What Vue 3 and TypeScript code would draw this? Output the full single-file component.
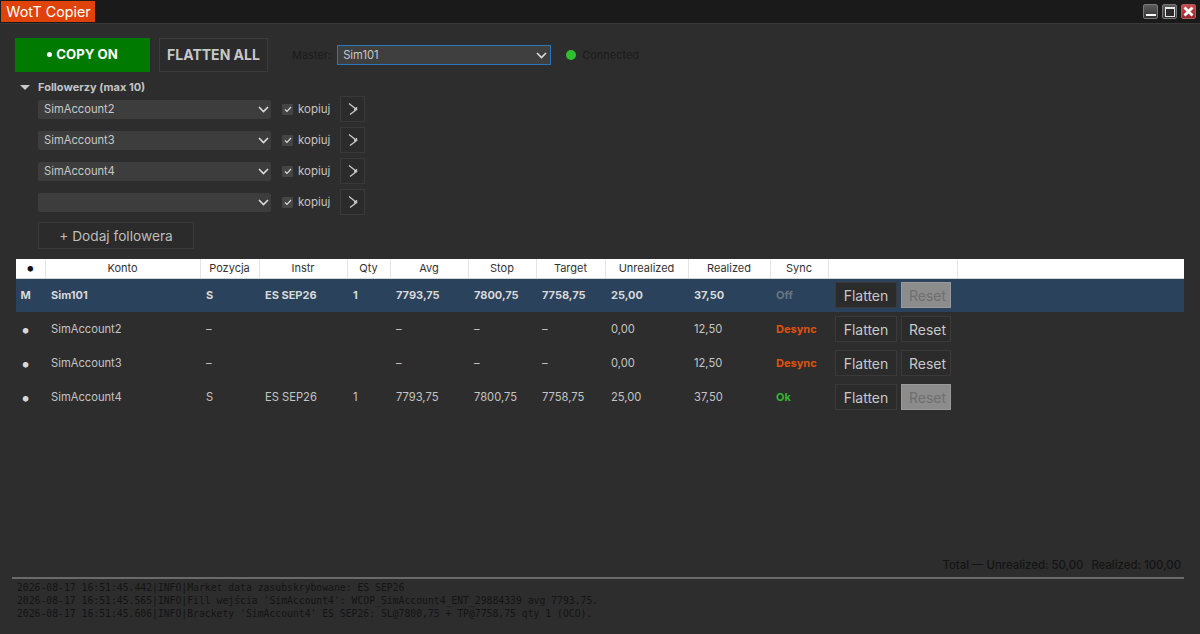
<script setup lang="ts">
type Sync = 'off' | 'desync' | 'ok'

interface Account {
  mark: string
  name: string
  pos: string
  instr: string
  qty: string
  avg: string
  stop: string
  target: string
  unrealized: string
  realized: string
  sync: Sync
  syncLabel: string
  resetDisabled: boolean
  master?: boolean
}

const followers = ['SimAccount2', 'SimAccount3', 'SimAccount4', '']

const columns = [
  { label: '•', width: 29 },
  { label: 'Konto', width: 155 },
  { label: 'Pozycja', width: 59 },
  { label: 'Instr', width: 88 },
  { label: 'Qty', width: 43 },
  { label: 'Avg', width: 78 },
  { label: 'Stop', width: 68 },
  { label: 'Target', width: 69 },
  { label: 'Unrealized', width: 83 },
  { label: 'Realized', width: 82 },
  { label: 'Sync', width: 58 },
  { label: '', width: 129 },
  { label: '', width: 227 },
]

const accounts: Account[] = [
  { mark: 'M', name: 'Sim101', pos: 'S', instr: 'ES SEP26', qty: '1', avg: '7793,75', stop: '7800,75', target: '7758,75', unrealized: '25,00', realized: '37,50', sync: 'off', syncLabel: 'Off', resetDisabled: true, master: true },
  { mark: '•', name: 'SimAccount2', pos: '–', instr: '', qty: '', avg: '–', stop: '–', target: '–', unrealized: '0,00', realized: '12,50', sync: 'desync', syncLabel: 'Desync', resetDisabled: false },
  { mark: '•', name: 'SimAccount3', pos: '–', instr: '', qty: '', avg: '–', stop: '–', target: '–', unrealized: '0,00', realized: '12,50', sync: 'desync', syncLabel: 'Desync', resetDisabled: false },
  { mark: '•', name: 'SimAccount4', pos: 'S', instr: 'ES SEP26', qty: '1', avg: '7793,75', stop: '7800,75', target: '7758,75', unrealized: '25,00', realized: '37,50', sync: 'ok', syncLabel: 'Ok', resetDisabled: true },
]

const logLines = [
  "2026-08-17 16:51:45.442|INFO|Market data zasubskrybowane: ES SEP26",
  "2026-08-17 16:51:45.565|INFO|Fill wejścia 'SimAccount4': WCOP_SimAccount4_ENT_29884339 avg 7793,75.",
  "2026-08-17 16:51:45.606|INFO|Brackety 'SimAccount4' ES SEP26: SL@7800,75 + TP@7758,75 qty 1 (OCO).",
]
</script>

<template>
  <div class="window">
    <header class="titlebar">
      <div class="title">WotT Copier</div>
      <div class="win-buttons">
        <button class="win-btn" type="button" aria-label="Minimize"><span class="win-min"></span></button>
        <button class="win-btn" type="button" aria-label="Maximize"><span class="win-max"></span></button>
        <button class="win-btn win-close" type="button" aria-label="Close">
          <svg width="11" height="11" viewBox="0 0 11 11"><path d="M1.5 1.5l8 8M9.5 1.5l-8 8" stroke="#fff" stroke-width="2.8" /></svg>
        </button>
      </div>
    </header>

    <main class="content">
      <section class="toolbar">
        <button class="copy-btn" type="button"><span class="copy-dot"></span>COPY ON</button>
        <button class="flatten-all" type="button">FLATTEN ALL</button>
        <label class="master-label">Master:</label>
        <div class="select select--master">
          <span>Sim101</span>
          <svg class="chevron" width="11" height="7" viewBox="0 0 11 7"><path d="M1 1l4.5 4.5L10 1" fill="none" stroke="#dcdcdc" stroke-width="1.6" /></svg>
        </div>
        <span class="status-dot"></span>
        <span class="status-text">Connected</span>
      </section>

      <section class="followers">
        <div class="followers-head">
          <span class="arrow"></span>
          <span>Followerzy (max 10)</span>
        </div>
        <div v-for="(follower, i) in followers" :key="i" class="follower-row">
          <div class="select select--follower">
            <span>{{ follower }}</span>
            <svg class="chevron" width="11" height="7" viewBox="0 0 11 7"><path d="M1 1l4.5 4.5L10 1" fill="none" stroke="#dcdcdc" stroke-width="1.6" /></svg>
          </div>
          <span class="checkbox">
            <svg width="8" height="7" viewBox="0 0 8 7"><path d="M1 3.5l2 2L7 1" fill="none" stroke="#d8d8d8" stroke-width="1.2" /></svg>
          </span>
          <span class="copy-label">kopiuj</span>
          <button class="go-btn" type="button">
            <svg width="12" height="14" viewBox="0 0 12 14"><path d="M2 1.5l7.5 6-6.5 5M9.5 5v2.5H7" fill="none" stroke="#c4c4c4" stroke-width="1.4" /></svg>
          </button>
        </div>
        <button class="add-btn" type="button">+ Dodaj followera</button>
      </section>

      <section class="grid-wrap">
        <table class="grid">
          <colgroup>
            <col v-for="(col, i) in columns" :key="i" :style="{ width: col.width + 'px' }" />
          </colgroup>
          <thead>
            <tr>
              <th v-for="(col, i) in columns" :key="i">{{ col.label }}</th>
            </tr>
          </thead>
          <tbody>
            <tr v-for="acc in accounts" :key="acc.name" :class="{ master: acc.master }">
              <td class="mark">{{ acc.mark }}</td>
              <td>{{ acc.name }}</td>
              <td>{{ acc.pos }}</td>
              <td>{{ acc.instr }}</td>
              <td>{{ acc.qty }}</td>
              <td>{{ acc.avg }}</td>
              <td>{{ acc.stop }}</td>
              <td>{{ acc.target }}</td>
              <td>{{ acc.unrealized }}</td>
              <td>{{ acc.realized }}</td>
              <td class="sync" :class="`sync--${acc.sync}`">{{ acc.syncLabel }}</td>
              <td class="actions" colspan="2">
                <div class="action-btns">
                  <button class="row-btn row-btn--flatten" type="button">Flatten</button>
                  <button class="row-btn row-btn--reset" :class="{ disabled: acc.resetDisabled }" type="button">Reset</button>
                </div>
              </td>
            </tr>
          </tbody>
        </table>
      </section>

      <div class="totals">
        <span>Total — Unrealized: 50,00</span>
        <span>Realized: 100,00</span>
      </div>

      <div class="log">
        <div v-for="line in logLines" :key="line" class="log-line">{{ line }}</div>
      </div>
    </main>
  </div>
</template>

<style>
html, body {
  margin: 0;
  background: #2d2d2d;
}
</style>

<style scoped>
.window {
  width: 1200px;
  height: 634px;
  display: flex;
  flex-direction: column;
  overflow: hidden;
  background: #2d2d2d;
  font-family: Inter, "Noto Sans", sans-serif;
  color: #d6d6d6;
  box-sizing: border-box;
}
button {
  font-family: inherit;
  margin: 0;
  padding: 0;
  cursor: pointer;
}

.titlebar {
  height: 23px;
  flex: none;
  display: flex;
  justify-content: space-between;
  align-items: flex-start;
  background: #1a1a1a;
  border-bottom: 1px solid #3a3a3a;
}
.title {
  margin-left: 1px;
  margin-top: 1px;
  width: 93px;
  padding-left: 1px;
  height: 21px;
  line-height: 21px;
  text-align: center;
  background: #e0430a;
  color: #fff;
  font-size: 14.3px;
}
.win-buttons {
  display: flex;
  gap: 4px;
  margin: 4px 4px 0 0;
}
.win-btn {
  width: 15px;
  height: 15px;
  display: flex;
  align-items: center;
  justify-content: center;
  border: 1px solid #787878;
  border-radius: 2px;
  background: linear-gradient(#5c5c5c, #333);
  box-sizing: border-box;
}
.win-min {
  width: 10px;
  height: 2px;
  margin-top: 7px;
  background: #fff;
}
.win-max {
  width: 10px;
  height: 10px;
  box-sizing: border-box;
  border: 1px solid #e8e8e8;
  border-top-width: 2px;
  background: #2a2a2a;
}
.win-close {
  border-color: #b05a5a;
  background: linear-gradient(#c84a4e, #96282c);
}

.content {
  flex: 1;
  min-height: 0;
  display: flex;
  flex-direction: column;
  padding: 14px 16px 0 15px;
}

.toolbar {
  display: flex;
  align-items: center;
  height: 34px;
}
.copy-btn {
  width: 135px;
  height: 34px;
  padding-bottom: 2px;
  display: flex;
  align-items: center;
  justify-content: center;
  gap: 4px;
  border: none;
  background: #007a00;
  color: #fff;
  font-size: 13.2px;
  font-weight: 700;
}
.copy-dot {
  width: 5px;
  height: 5px;
  border-radius: 50%;
  background: #fff;
}
.flatten-all {
  width: 109px;
  height: 34px;
  margin-left: 9px;
  padding-bottom: 2px;
  border: 1px solid #3c3c3c;
  background: #2b2b2b;
  color: #c8c8c8;
  font-size: 14px;
  font-weight: 700;
}
.master-label {
  margin-left: 24px;
  font-size: 11px;
  color: #1b1b1b;
}
.select {
  display: flex;
  align-items: center;
  justify-content: space-between;
  box-sizing: border-box;
  background: #3f3f3f;
  color: #c8c8c8;
  font-size: 11.2px;
}
.select--master {
  width: 214px;
  height: 20px;
  margin-left: 6px;
  padding: 0 1px 0 5px;
  border: 1px solid #2a76b8;
}
.select--master .chevron {
  margin-right: 2px;
}
.status-dot {
  width: 10px;
  height: 10px;
  margin-left: 15px;
  border-radius: 50%;
  background: #2fc02f;
}
.status-text {
  margin-left: 6px;
  font-size: 11px;
  color: #1b1b1b;
}

.followers {
  margin-top: 8px;
  display: flex;
  flex-direction: column;
  align-items: flex-start;
}
.followers-head {
  display: flex;
  align-items: center;
  height: 14px;
  font-size: 11px;
  font-weight: 700;
  color: #c4c4c4;
}
.arrow {
  width: 0;
  height: 0;
  margin: 0 8px 0 5px;
  border-left: 5px solid transparent;
  border-right: 5px solid transparent;
  border-top: 5px solid #c8c8c8;
}
.follower-row {
  display: flex;
  align-items: center;
  height: 26px;
  margin-top: 5px;
  margin-left: 23px;
}
.followers-head + .follower-row {
  margin-top: 2px;
}
.select--follower {
  width: 233px;
  height: 19px;
  padding: 0 2px 0 6px;
  background: #3d3d3d;
  border-radius: 2px;
}
.checkbox {
  width: 11px;
  height: 11px;
  margin-left: 11px;
  display: flex;
  align-items: center;
  justify-content: center;
  background: #454545;
  border-radius: 1px;
}
.copy-label {
  margin-left: 5px;
  width: 32px;
  font-size: 11.5px;
  color: #c4c4c4;
}
.go-btn {
  width: 25px;
  height: 26px;
  margin-left: 10px;
  display: flex;
  align-items: center;
  justify-content: center;
  border: 1px solid #3a3a3a;
  background: #2b2b2b;
}
.add-btn {
  width: 156px;
  height: 27px;
  margin-top: 7px;
  margin-left: 23px;
  border: 1px solid #3a3a3a;
  background: #2b2b2b;
  color: #bdbdbd;
  font-size: 13.7px;
}

.grid-wrap {
  margin-top: 10px;
  margin-left: 1px;
  flex: 1;
  min-height: 0;
}
.grid {
  width: 1168px;
  table-layout: fixed;
  border-collapse: collapse;
  font-size: 11.2px;
}
.grid th {
  height: 19px;
  padding: 0;
  background: #fff;
  color: #333;
  font-size: 11px;
  font-weight: 400;
  text-align: center;
  border-right: 1px solid #e4e4e4;
  border-bottom: 1px solid #cfd4d8;
  box-sizing: border-box;
}
.grid th:first-child {
  font-size: 18px;
  color: #111;
  line-height: 1;
}
.grid th:last-child {
  border-right: none;
}
.grid td {
  height: 34px;
  padding: 0 0 0 6px;
  box-sizing: border-box;
  color: #c4c4c4;
  white-space: nowrap;
  overflow: hidden;
}
.grid td.mark {
  padding: 0 10px 0 0;
  text-align: center;
  font-size: 18px;
  color: #d8d8d8;
}
.grid tr.master td {
  background: #2a425c;
  color: #d8d8d8;
  font-size: 11px;
  font-weight: 700;
}
.grid tr.master td.mark {
  font-size: 11px;
}
.grid .sync {
  font-size: 11px;
  font-weight: 700;
}
.grid .sync--off,
.grid tr.master .sync--off {
  color: #6b7480;
}
.grid .sync--desync {
  color: #e0500f;
}
.grid .sync--ok {
  color: #2fb52f;
}
.action-btns {
  display: flex;
  gap: 4px;
  margin-left: 1px;
}
.row-btn {
  height: 26px;
  font-size: 14px;
  box-sizing: border-box;
}
.row-btn--flatten {
  width: 62px;
  border: 1px solid #3a3a3a;
  background: #2b2b2b;
  color: #c8c8c8;
}
.row-btn--reset {
  width: 50px;
  padding-left: 3px;
  border: 1px solid #3a3a3a;
  background: #2b2b2b;
  color: #c8c8c8;
}
.row-btn--reset.disabled {
  border-color: #999;
  background: #8c8c8c;
  color: #6f6f6f;
}

.totals {
  display: flex;
  justify-content: flex-end;
  gap: 8px;
  height: 16px;
  line-height: 16px;
  margin-top: -2px;
  padding-right: 3px;
  font-size: 11.4px;
  font-weight: 500;
  color: #141414;
}
.log {
  height: 57px;
  margin-top: 4px;
  margin-left: -3px;
  padding: 2px 0 0 5px;
  border-top: 2px solid #6a6a6a;
  box-sizing: border-box;
}
.log-line {
  height: 13px;
  line-height: 13px;
  font-family: "DejaVu Sans Mono", "Liberation Mono", monospace;
  font-size: 9.76px;
  color: #141414;
  white-space: nowrap;
}
</style>
